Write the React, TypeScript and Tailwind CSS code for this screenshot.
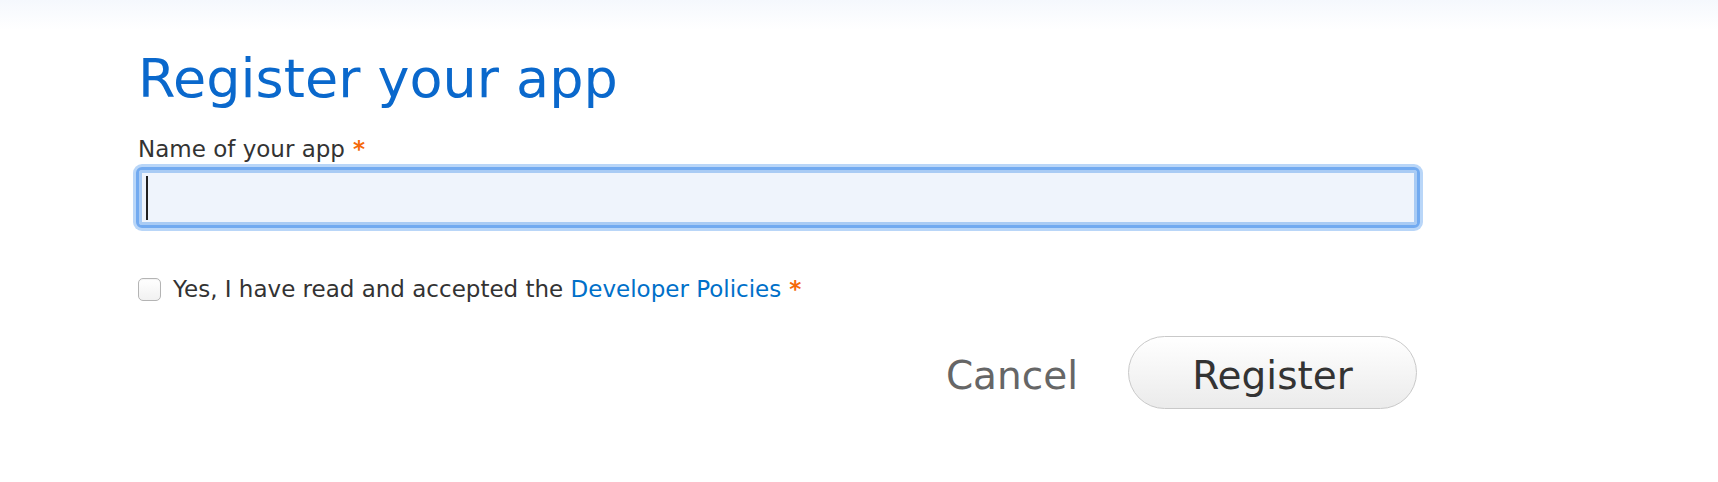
import React, { useState } from "react";

const font = { fontFamily: '"DejaVu Sans", "Liberation Sans", sans-serif' };

function Star() {
    return <span className="text-[#f56a0a] font-bold"> *</span>;
}

export default function App() {
    const [accepted, setAccepted] = useState(false);

    return (
        <div className="min-h-screen bg-[linear-gradient(to_bottom,#f5f8fd,#ffffff_30px)]" style={font}>
            <div className="w-[1282px] ml-[138px] pt-[46px]">
                <h1 className="text-[54px] leading-[65px] text-[#0a68cc] font-normal">Register your app</h1>

                <label className="block mt-[24px] text-[23px] leading-[28px] text-[#333]">
                    Name of your app<Star />
                </label>

                {/* focused text field */}
                <div className="mt-[4px] -ml-[2px] w-[1284px] h-[61px] rounded-[6px] border-[3px] border-[#72aaf0] bg-[#eff4fc] shadow-[0_0_0_3px_#b9d6f8,inset_0_0_0_3px_#a9cbf4] flex items-center pl-[7px]">
                    <span className="block w-[2px] h-[44px] bg-[#222]" />
                </div>

                <div className="mt-[47px] flex items-center">
                    <button
                        type="button"
                        onClick={() => setAccepted(!accepted)}
                        className="w-[23px] h-[23px] rounded-[5px] border border-[#b4b4b4] bg-gradient-to-b from-white to-[#f1f1f1] shadow-[inset_0_1px_1px_rgba(0,0,0,0.05)]"
                    >
                        {accepted && <span className="text-[16px] leading-none text-[#333]">✓</span>}
                    </button>
                    <p className="ml-[12px] text-[23px] leading-[28px] text-[#333]">
                        Yes, I have read and accepted the <a href="#" className="text-[#0070c9]">Developer Policies</a><Star />
                    </p>
                </div>

                <div className="mt-[33px] flex items-center justify-end pr-[3px]">
                    <button type="button" className="h-[73px] pt-[6px] text-[39px] leading-[46px] text-[#666]">Cancel</button>
                    <button
                        type="button"
                        className="ml-[50px] w-[289px] h-[73px] pt-[6px] rounded-full border border-[#c9c9c9] bg-gradient-to-b from-white to-[#ebebeb] text-[39px] leading-[46px] text-[#333]"
                    >
                        Register
                    </button>
                </div>
            </div>
        </div>
    );
}
